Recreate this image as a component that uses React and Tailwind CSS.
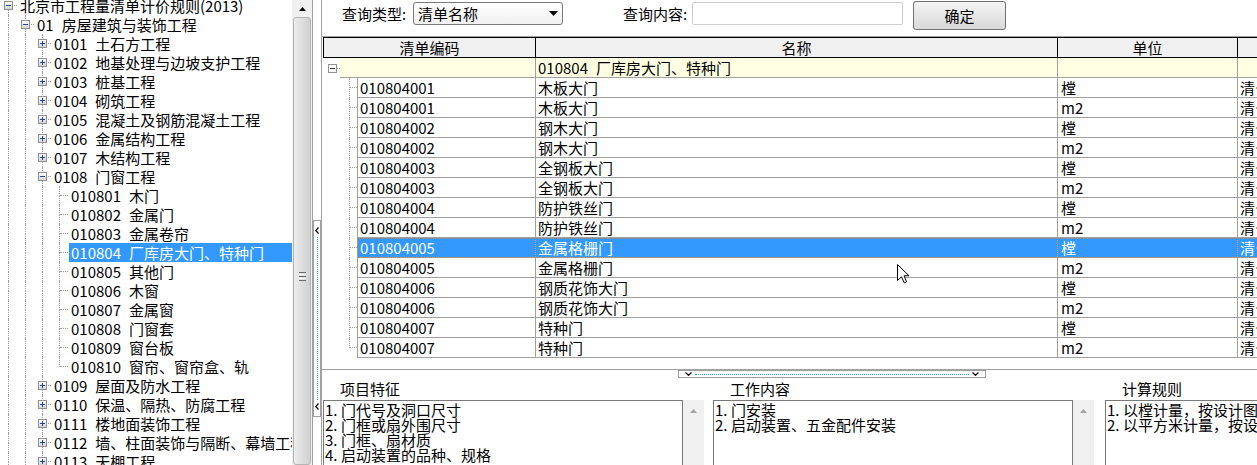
import React from "react";

const FONT = "font-['Noto_Sans_CJK_SC','Noto_Sans',sans-serif]";

const treeNodes = [
  { lv: 0, box: "open", text: "北京市工程量清单计价规则(2013)" },
  { lv: 1, box: "open", code: "01", text: "房屋建筑与装饰工程" },
  { lv: 2, box: "closed", code: "0101", text: "土石方工程" },
  { lv: 2, box: "closed", code: "0102", text: "地基处理与边坡支护工程" },
  { lv: 2, box: "closed", code: "0103", text: "桩基工程" },
  { lv: 2, box: "closed", code: "0104", text: "砌筑工程" },
  { lv: 2, box: "closed", code: "0105", text: "混凝土及钢筋混凝土工程" },
  { lv: 2, box: "closed", code: "0106", text: "金属结构工程" },
  { lv: 2, box: "closed", code: "0107", text: "木结构工程" },
  { lv: 2, box: "open", code: "0108", text: "门窗工程" },
  { lv: 3, code: "010801", text: "木门" },
  { lv: 3, code: "010802", text: "金属门" },
  { lv: 3, code: "010803", text: "金属卷帘" },
  { lv: 3, code: "010804", text: "厂库房大门、特种门", sel: true },
  { lv: 3, code: "010805", text: "其他门" },
  { lv: 3, code: "010806", text: "木窗" },
  { lv: 3, code: "010807", text: "金属窗" },
  { lv: 3, code: "010808", text: "门窗套" },
  { lv: 3, code: "010809", text: "窗台板" },
  { lv: 3, code: "010810", text: "窗帘、窗帘盒、轨", last: true },
  { lv: 2, box: "closed", code: "0109", text: "屋面及防水工程" },
  { lv: 2, box: "closed", code: "0110", text: "保温、隔热、防腐工程" },
  { lv: 2, box: "closed", code: "0111", text: "楼地面装饰工程" },
  { lv: 2, box: "closed", code: "0112", text: "墙、柱面装饰与隔断、幕墙工程" },
  { lv: 2, box: "closed", code: "0113", text: "天棚工程" },
];

const rows = [
  ["010804001", "木板大门", "樘"],
  ["010804001", "木板大门", "m2"],
  ["010804002", "钢木大门", "樘"],
  ["010804002", "钢木大门", "m2"],
  ["010804003", "全钢板大门", "樘"],
  ["010804003", "全钢板大门", "m2"],
  ["010804004", "防护铁丝门", "樘"],
  ["010804004", "防护铁丝门", "m2"],
  ["010804005", "金属格栅门", "樘"],
  ["010804005", "金属格栅门", "m2"],
  ["010804006", "钢质花饰大门", "樘"],
  ["010804006", "钢质花饰大门", "m2"],
  ["010804007", "特种门", "樘"],
  ["010804007", "特种门", "m2"],
];

const panels = [
  { title: "项目特征", lines: ["门代号及洞口尺寸", "门框或扇外围尺寸", "门框、扇材质", "启动装置的品种、规格"] },
  { title: "工作内容", lines: ["门安装", "启动装置、五金配件安装"] },
  { title: "计算规则", lines: ["以樘计量，按设计图示数量计算", "以平方米计量，按设计图示洞口尺寸以面积计算"] },
];

function ExpandBox({ open, plain, className = "" }) {
  const ink = plain ? "#3a3a3a" : "#22449a";
  return (
    <svg width="9" height="9" viewBox="0 0 9 9" className={"block " + className}>
      <defs>
        <linearGradient id="bxg" x1="0" y1="0" x2="0" y2="1">
          <stop offset="0" stopColor="#ffffff" />
          <stop offset="1" stopColor="#d2d2d2" />
        </linearGradient>
      </defs>
      <rect x="0.5" y="0.5" width="8" height="8" fill={plain ? "#ffffff" : "url(#bxg)"} stroke="#919191" />
      <path d="M2 4.5h5" stroke={ink} />
      {!open && <path d="M4.5 2v5" stroke={ink} />}
    </svg>
  );
}

function TreeCell({ up, down, right, box }) {
  return (
    <div className="relative w-[17px] h-full shrink-0">
      {up && <div className="absolute left-[8px] top-0 h-[10px] border-l border-dotted border-[#a0a0a0]" />}
      {down && <div className="absolute left-[8px] top-[9px] bottom-0 border-l border-dotted border-[#a0a0a0]" />}
      {right && <div className="absolute left-[9px] right-0 top-[9px] border-t border-dotted border-[#a0a0a0]" />}
      {box && <ExpandBox open={box === "open"} className="absolute left-[4px] top-[5px]" />}
    </div>
  );
}

function TreeRow({ node }) {
  const cells = [];
  for (let i = 0; i < node.lv; i++) cells.push(<TreeCell key={i} up down />);
  if (node.box) cells.push(<TreeCell key="b" box={node.box} up={node.lv > 0} down right />);
  else cells.push(<TreeCell key="l" up down={!node.last} right />);
  return (
    <div className="flex h-[19px]">
      {cells}
      <div
        className={`ml-px pl-[2px] flex-1 h-full flex items-center whitespace-nowrap overflow-hidden leading-[19px] ${
          node.sel ? "bg-[#3399ff] text-white" : ""
        }`}
      >
        {node.code && <span className="mr-2">{node.code}</span>}
        <span>{node.text}</span>
      </div>
    </div>
  );
}

function UpArrow({ color = "#000" }) {
  return (
    <svg width="7" height="4" viewBox="0 0 7 4" className="block">
      <polygon points="0,4 3.5,0 7,4" fill={color} />
    </svg>
  );
}

function ChevronLeft() {
  return (
    <svg width="4" height="7" viewBox="0 0 4 7" className="block">
      <polyline points="3.5,0.5 0.8,3.5 3.5,6.5" fill="none" stroke="#000" strokeWidth="1.2" />
    </svg>
  );
}

function ChevronDown() {
  return (
    <svg width="7" height="4" viewBox="0 0 7 4" className="block">
      <polyline points="0.5,0.5 3.5,3.3 6.5,0.5" fill="none" stroke="#000" strokeWidth="1.2" />
    </svg>
  );
}

function DataRow({ r, last, sel }) {
  const sep = sel ? "border-dotted border-[#d29a62]" : "border-[#a0a0a0]";
  return (
    <div className="flex h-[20px] leading-[19px]">
      <div className="relative w-[34px] shrink-0">
        <div
          className={`absolute left-[26px] top-0 ${last ? "h-[10px]" : "bottom-0"} border-l border-dotted border-[#a0a0a0]`}
        />
        <div className="absolute left-[27px] right-0 top-[9px] border-t border-dotted border-[#a0a0a0]" />
      </div>
      <div
        className={`flex flex-1 border-b border-[#a0a0a0] ${
          sel ? "bg-[#3399ff] text-white outline-1 outline-dotted outline-[#c08550] -outline-offset-1" : ""
        }`}
      >
        <div className={`w-[179px] shrink-0 border-x ${sep} pl-[2px] flex items-center`}>{r[0]}</div>
        <div className={`w-[522px] shrink-0 border-r ${sep} pl-[2px] flex items-center`}>{r[1]}</div>
        <div className={`w-[180px] shrink-0 border-r ${sep} pl-[3px] flex items-center`}>{r[2]}</div>
        <div className="flex-1 pl-[2px] flex items-center overflow-hidden whitespace-nowrap">清…</div>
      </div>
    </div>
  );
}

function Cursor() {
  return (
    <svg width="13" height="20" viewBox="0 0 13 20" className="absolute left-[897px] top-[264px]">
      <path
        d="M0.5 0.5 L0.5 16.5 L4.5 12.8 L7.2 18.8 L9.6 17.8 L7 11.8 L12 11.8 Z"
        fill="#fff"
        stroke="#000"
        strokeWidth="1"
        strokeLinejoin="round"
      />
    </svg>
  );
}

export default function App() {
  return (
    <div className={`relative w-[1257px] h-[465px] overflow-hidden flex bg-white text-black text-[15px] ${FONT}`}>
      {/* left tree panel */}
      <div className="w-[313px] h-full flex border-r border-[#a0a0a0] shrink-0">
        <div className="w-[292px] h-full overflow-hidden">
          <div className="-mt-[4px]">
            {treeNodes.map((n, i) => (
              <TreeRow key={i} node={n} />
            ))}
          </div>
        </div>
        <div className="w-[20px] h-full bg-[#f0f0f0] flex flex-col">
          <div className="h-[17px] flex items-center justify-center shrink-0">
            <UpArrow />
          </div>
          <div className="mx-px h-[460px] rounded-[3px] border border-[#b4b4b4] bg-linear-to-r from-[#ececec] via-[#dedede] to-[#d0d0d0] flex flex-col items-center">
            <div className="mt-[254px] flex flex-col gap-[1px]">
              <div className="w-[7px] h-px bg-[#6a6a6a]" />
              <div className="w-[7px] h-px bg-[#f8f8f8]" />
              <div className="w-[7px] h-px bg-[#6a6a6a]" />
              <div className="w-[7px] h-px bg-[#f8f8f8]" />
              <div className="w-[7px] h-px bg-[#6a6a6a]" />
            </div>
          </div>
        </div>
      </div>

      {/* vertical splitter */}
      <div className="w-[9px] h-full border-r border-[#a0a0a0] shrink-0">
        <div className="mt-[220px] h-[197px] w-[8px] border border-[#a0a0a0] bg-white flex flex-col items-center py-[6px]">
          <ChevronLeft />
          <div className="flex-1 my-[3px] border-l border-dotted border-[#3399ff]" />
          <ChevronLeft />
        </div>
      </div>

      {/* right panel */}
      <div className="w-[935px] h-full flex flex-col overflow-hidden shrink-0">
        {/* toolbar */}
        <div className="h-[36px] flex items-start shrink-0 leading-[20px]">
          <div className="ml-[20px] mt-[2px] h-[23px] w-[71px] flex items-center">查询类型:</div>
          <div className="mt-[2px] h-[23px] w-[150px] rounded-[3px] border border-[#7a7a7a] bg-linear-to-b from-[#ffffff] to-[#f0f0f0] flex items-center justify-between pl-[4px] pr-[4px]">
            <span>清单名称</span>
            <svg width="9" height="5" viewBox="0 0 9 5" className="block">
              <polygon points="0,0 9,0 4.5,5" fill="#000" />
            </svg>
          </div>
          <div className="ml-[60px] mt-[2px] h-[23px] w-[69px] flex items-center">查询内容:</div>
          <div className="mt-[2px] h-[23px] w-[211px] rounded-[2px] border border-[#cdcdcd] bg-white" />
          <div className="ml-[10px] mt-[1px] h-[29px] w-[93px] rounded-[3px] border border-[#707070] bg-linear-to-b from-[#f4f4f4] to-[#d8d8d8] flex items-center justify-center">
            确定
          </div>
        </div>

        {/* table */}
        <div className="relative h-[334px] border-t border-b border-[#a0a0a0] shrink-0 pl-px">
          <div className="flex h-[21px] leading-[19px] bg-[#f0f0f0] border-y border-black">
            <div className="w-[213px] shrink-0 border-x border-black flex items-center justify-center">清单编码</div>
            <div className="w-[522px] shrink-0 border-r border-black flex items-center justify-center">名称</div>
            <div className="w-[180px] shrink-0 border-r border-black flex items-center justify-center">单位</div>
            <div className="flex-1" />
          </div>
          <div className="flex h-[20px] leading-[19px]">
            <div className="relative w-[17px] shrink-0">
              <ExpandBox open plain className="absolute left-[5px] top-[6px]" />
              <div className="absolute left-[14px] right-0 top-[10px] border-t border-dotted border-[#a0a0a0]" />
            </div>
            <div className="flex flex-1 bg-[#ffffe4] border-b border-[#a0a0a0]">
              <div className="w-[196px] shrink-0 border-r border-[#a0a0a0]" />
              <div className="w-[522px] shrink-0 border-r border-[#a0a0a0] pl-[2px] flex items-center whitespace-nowrap">
                <span className="mr-2">010804</span>
                <span>厂库房大门、特种门</span>
              </div>
              <div className="w-[180px] shrink-0 border-r border-[#a0a0a0]" />
              <div className="flex-1" />
            </div>
          </div>
          {rows.map((r, i) => (
            <DataRow key={i} r={r} last={i === rows.length - 1} sel={i === 8} />
          ))}
        </div>

        {/* horizontal splitter */}
        <div className="h-[8px] shrink-0 flex items-center">
          <div className="ml-[356px] w-[308px] h-[8px] border border-[#a0a0a0] bg-white flex items-center px-[6px]">
            <ChevronDown />
            <div className="flex-1 mx-[3px] border-t border-dotted border-[#3399ff]" />
            <ChevronDown />
          </div>
        </div>

        {/* bottom panels */}
        <div className="flex pl-px">
          {panels.map((p, i) => (
            <div key={i} className={`${i === 0 ? "w-[390px]" : i === 1 ? "w-[392px]" : "w-[360px]"} shrink-0 flex flex-col`}>
              <div className="h-[22px] pl-[17px] flex items-center leading-[20px]">{p.title}</div>
              <div className="flex">
                <div className="w-[360px] h-[70px] shrink-0 border border-[#7a7a7a] bg-white pl-[1px] pt-[1px] leading-[15px] overflow-hidden">
                  {p.lines.map((l, j) => (
                    <div key={j} className="h-[15px] whitespace-nowrap flex">
                      <span className="inline-block w-[16px] shrink-0">{j + 1}.</span>
                      <span>{l}</span>
                    </div>
                  ))}
                </div>
                {i < 2 && (
                  <div className="w-[21px] h-[70px] bg-[#f0f0f0] flex justify-center pt-[9px]">
                    <UpArrow color="#a3a3a3" />
                  </div>
                )}
              </div>
            </div>
          ))}
        </div>
      </div>

      <Cursor />
    </div>
  );
}
